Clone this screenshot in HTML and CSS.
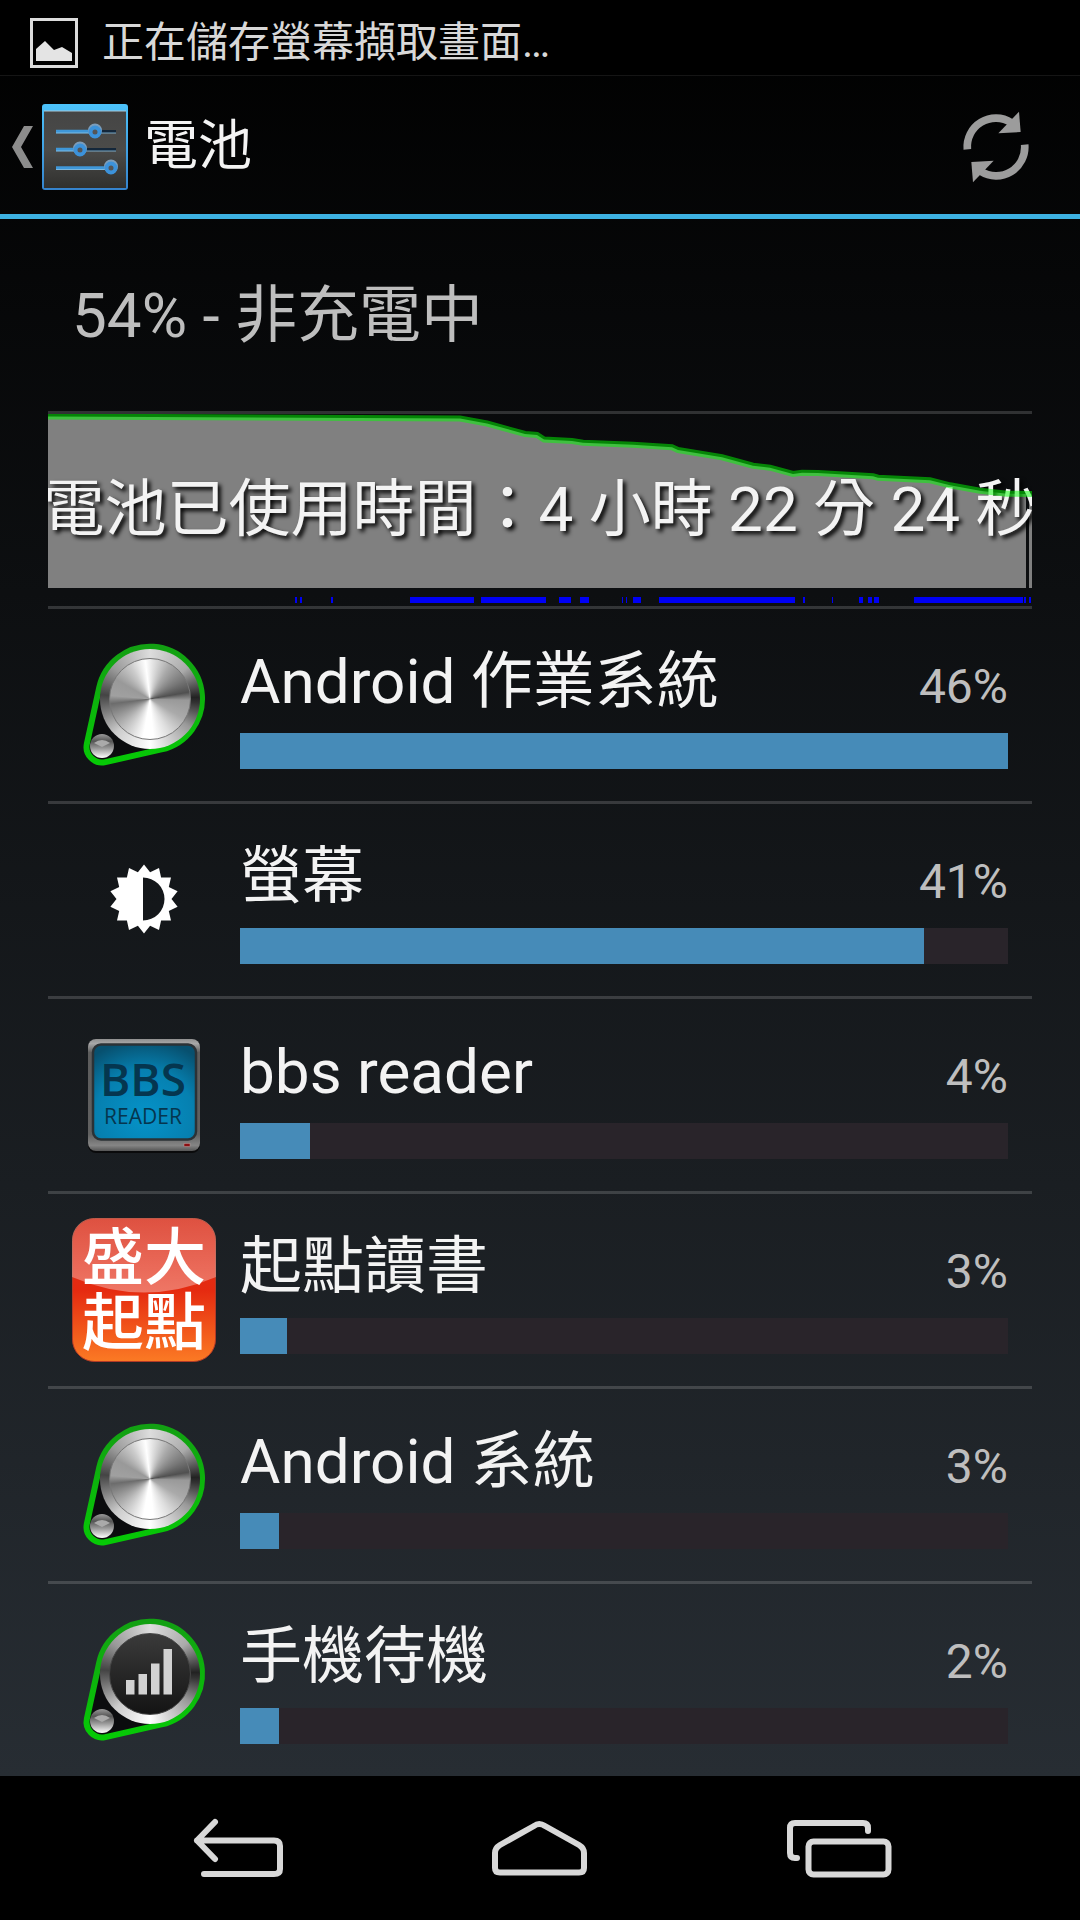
FILE: index.html
```html
<!DOCTYPE html>
<html lang="zh-Hant-TW">
<head>
  <meta charset="UTF-8">
  <title>電池</title>
  <meta name="viewport" content="width=device-width, initial-scale=1.0">
  <link rel="stylesheet" href="styles.css">
</head>
<body>
  <!-- shared drawings -->
  <svg class="defs" aria-hidden="true">
    <defs>
      <linearGradient id="steel" x1="0" y1="0" x2="0" y2="1">
        <stop offset="0" stop-color="#999"/>
        <stop offset=".3" stop-color="#555"/>
        <stop offset=".6" stop-color="#999"/>
        <stop offset="1" stop-color="#fff"/>
      </linearGradient>
      <linearGradient id="belt" x1="0" y1="0" x2="0" y2="1">
        <stop offset="0" stop-color="#12a012"/>
        <stop offset="1" stop-color="#06c906"/>
      </linearGradient>
      <g id="belt-shape">
        <path d="M27.2 54.6A52 52 0 1 1 89.4 116.4L33.4 129.1A15.5 15.5 0 0 1 14.9 110.7Z" fill="#0b0c0e" stroke="url(#belt)" stroke-width="6"/>
        <circle cx="30" cy="113" r="12" fill="url(#steel)"/>
        <path d="M22 110Q30 104 38 110L30 114Z" fill="#aaa"/>
      </g>
    </defs>
  </svg>

  <div class="status-bar">
    <svg class="status-icon" viewBox="0 0 48 50">
      <rect x="1.5" y="1.5" width="45" height="47" fill="none" stroke="#dcdcdc" stroke-width="3"/>
      <path d="M6 31L15 23L24 32L32 29L42 35V43H6Z" fill="#e4e4e4"/>
    </svg>
    <span>正在儲存螢幕擷取畫面…</span>
  </div>

  <header class="action-bar">
    <a class="up" href="#" aria-label="返回">
      <svg class="chevron" viewBox="0 0 22 42">
        <path d="M12 0H21L9 21L21 42H12L0 21Z" fill="#8c8c8c"/>
      </svg>
      <svg class="settings-icon" viewBox="0 0 86 86">
        <defs>
          <linearGradient id="frame" x1="0" y1="0" x2="0" y2="1">
            <stop offset="0" stop-color="#4cc3fb"/>
            <stop offset="1" stop-color="#3583cd"/>
          </linearGradient>
          <linearGradient id="plate" x1="0" y1="0" x2="0" y2="1">
            <stop offset="0" stop-color="#454545"/>
            <stop offset=".5" stop-color="#4b4b49"/>
            <stop offset="1" stop-color="#30302e"/>
          </linearGradient>
        </defs>
        <rect width="86" height="86" rx="3" fill="url(#frame)"/>
        <rect x="2" y="7" width="82" height="77" fill="url(#plate)"/>
        <path d="M2 7H84" stroke="#a5c9dc"/>
        <path d="M53 27.5H74M38 45.5H74" stroke="#14273a" stroke-width="3"/>
        <path d="M14 27.5H53M14 45.5H38M14 64H69" stroke="#3f97d8" stroke-width="3.5"/>
        <path d="M14 29H47M14 47H32M14 65.5H63M59 29H74M44 47H74" stroke="#8ec6e8" stroke-width=".8"/>
        <g fill="#35618a" stroke="#7c9dba" stroke-width="6">
          <circle cx="53" cy="26.5" r="4"/>
          <circle cx="38" cy="44.5" r="4"/>
          <circle cx="69" cy="62.5" r="4"/>
        </g>
        <g fill="#555" stroke="#3c92da" stroke-width="4">
          <circle cx="53" cy="28" r="4.5"/>
          <circle cx="38" cy="46" r="4.5"/>
          <circle cx="69" cy="64" r="4.5"/>
        </g>
      </svg>
    </a>
    <h1>電池</h1>
    <button class="refresh" type="button" aria-label="重新整理">
      <svg viewBox="182 94 216 216">
        <g id="turn">
          <path d="M204 209A86 86 0 0 1 336 129" fill="none" stroke="#9c9c9c" stroke-width="23"/>
          <path d="M359 96L364 157L297 161Z" fill="#9c9c9c"/>
        </g>
        <use href="#turn" transform="rotate(180 290 202)"/>
      </svg>
    </button>
  </header>

  <main>
    <h2 class="summary">54% - 非充電中</h2>

    <div class="chart">
      <svg class="chart-area" viewBox="0 0 984 192" preserveAspectRatio="none">
        <path fill="#808080" d="M0 2.5L412 4.5L439 9.5L477 20L489 21L496 25.5L524 27L535 28.7L585 30.7L624 33.3L630 36L674 43.3L705 51.7L722 53.7L745 60L754 58.7L770 59L825 62.3L830 63.7L882 66.3L902 71.3L932 76.7L959 79.7L978 80V174H0ZM981 80H984V174H981Z"/>
        <path stroke="#0000f5" stroke-width="6" d="M247 186h2M252 186h2M283 186h2M362 186h64M433 186h65M511 186h12M532 186h9M574 186h1M578 186h1M585 186h8M611 186h136M755 186h2M784 186h1M811 186h4M820 186h4M826 186h5M866 186h109M976 186h2M981 186h2"/>
      </svg>
      <span class="chart-label">電池已使用時間：4 小時 22 分 24 秒</span>
      <svg class="chart-line" viewBox="0 0 984 192" preserveAspectRatio="none">
        <path fill="none" stroke="#00ff00" stroke-opacity=".5" stroke-width="6" d="M0 2.5L412 4.5L439 9.5L477 20L489 21L496 25.5L524 27L535 28.7L585 30.7L624 33.3L630 36L674 43.3L705 51.7L722 53.7L745 60L754 58.7L770 59L825 62.3L830 63.7L882 66.3L902 71.3L932 76.7L959 79.7L984 80"/>
      </svg>
    </div>

    <ul class="usage">
      <li>
        <svg class="app-icon" viewBox="0 0 144 144">
          <use href="#belt-shape"/>
          <foreignObject x="28" y="16" width="100" height="100">
            <div class="knob"><div class="knob-face"></div></div>
          </foreignObject>
        </svg>
        <div class="usage-body">
          <div class="usage-title"><span class="name">Android 作業系統</span><span class="percent">46%</span></div>
          <div class="bar"><div class="bar-fill" style="width: 100%"></div></div>
        </div>
      </li>
      <li>
        <svg class="app-icon" viewBox="0 0 144 144">
          <path fill="#fff" fill-rule="evenodd" d="M72 36.5L78.1 44.2L87 39.9L89.1 49.5L99 49.5L96.8 59.1L105.6 63.3L99.5 71L105.6 78.7L96.8 82.9L99 92.5L89.1 92.5L87 102.1L78.1 97.8L72 105.5L65.9 97.8L57 102.1L54.9 92.5L45 92.5L47.2 82.9L38.4 78.7L44.5 71L38.4 63.3L47.2 59.1L45 49.5L54.9 49.5L57 39.9L65.9 44.2ZM71 49.5V92.5A21.5 21.5 0 0 0 71 49.5Z"/>
        </svg>
        <div class="usage-body">
          <div class="usage-title"><span class="name">螢幕</span><span class="percent">41%</span></div>
          <div class="bar"><div class="bar-fill" style="width: 89.1%"></div></div>
        </div>
      </li>
      <li>
        <svg class="app-icon" viewBox="0 0 144 144">
          <defs>
            <linearGradient id="case" x1="0" y1="0" x2="0" y2="1">
              <stop offset="0" stop-color="#8f8f8f"/>
              <stop offset=".04" stop-color="#a8a8a8"/>
              <stop offset=".12" stop-color="#5c5c5c"/>
              <stop offset=".85" stop-color="#606060"/>
              <stop offset=".95" stop-color="#858585"/>
              <stop offset="1" stop-color="#555"/>
            </linearGradient>
            <radialGradient id="screen" cx=".5" cy=".75" r=".8">
              <stop offset="0" stop-color="#0593c9"/>
              <stop offset=".6" stop-color="#0680b0"/>
              <stop offset="1" stop-color="#07506f"/>
            </radialGradient>
          </defs>
          <rect x="16" y="18" width="112" height="112" rx="8" fill="#0a0a0b"/>
          <rect x="16" y="16" width="112" height="112" rx="8" fill="url(#case)"/>
          <rect x="21" y="21.5" width="103" height="95" rx="8" fill="url(#screen)" stroke="#2b3236" stroke-width="2.5"/>
          <text class="bbs" x="71" y="73">BBS</text>
          <text class="bbs-sub" x="71" y="101">READER</text>
          <rect x="112" y="120.5" width="6" height="3" fill="#8c0f12" stroke="#b99" stroke-width=".5"/>
        </svg>
        <div class="usage-body">
          <div class="usage-title"><span class="name">bbs reader</span><span class="percent">4%</span></div>
          <div class="bar"><div class="bar-fill" style="width: 9.1%"></div></div>
        </div>
      </li>
      <li>
        <svg class="app-icon" viewBox="0 0 144 144">
          <defs>
            <linearGradient id="seal" x1="0" y1="0" x2="0" y2="1">
              <stop offset="0" stop-color="#d8301c"/>
              <stop offset=".5" stop-color="#e52a10"/>
              <stop offset="1" stop-color="#fb7a24"/>
            </linearGradient>
            <linearGradient id="gloss" x1="0" y1="0" x2="0" y2="1">
              <stop offset="0" stop-color="#fff" stop-opacity=".16"/>
              <stop offset="1" stop-color="#fff" stop-opacity=".36"/>
            </linearGradient>
          </defs>
          <rect x=".5" y=".5" width="143" height="143" rx="22" fill="url(#seal)" stroke="#b33a26"/>
          <path d="M0 59V22A22 22 0 0 1 22 0H122A22 22 0 0 1 144 22V59Q72 90 0 59Z" fill="url(#gloss)"/>
          <text class="seal-text" x="41" y="62">盛</text>
          <text class="seal-text" x="103" y="62">大</text>
          <text class="seal-text" x="41" y="127">起</text>
          <text class="seal-text" x="103" y="127">點</text>
        </svg>
        <div class="usage-body">
          <div class="usage-title"><span class="name">起點讀書</span><span class="percent">3%</span></div>
          <div class="bar"><div class="bar-fill" style="width: 6.1%"></div></div>
        </div>
      </li>
      <li>
        <svg class="app-icon" viewBox="0 0 144 144">
          <use href="#belt-shape"/>
          <foreignObject x="28" y="16" width="100" height="100">
            <div class="knob"><div class="knob-face"></div></div>
          </foreignObject>
        </svg>
        <div class="usage-body">
          <div class="usage-title"><span class="name">Android 系統</span><span class="percent">3%</span></div>
          <div class="bar"><div class="bar-fill" style="width: 5.1%"></div></div>
        </div>
      </li>
      <li>
        <svg class="app-icon" viewBox="0 0 144 144">
          <use href="#belt-shape"/>
          <foreignObject x="28" y="16" width="100" height="100">
            <div class="knob"><div class="knob-face dark"></div></div>
          </foreignObject>
          <g fill="#d2d2d2">
            <rect x="54" y="72" width="8.5" height="14.5"/>
            <rect x="66.5" y="66" width="8.5" height="20.5"/>
            <rect x="79" y="55.5" width="8.5" height="31"/>
            <rect x="91.5" y="41" width="8.5" height="45.5"/>
          </g>
        </svg>
        <div class="usage-body">
          <div class="usage-title"><span class="name">手機待機</span><span class="percent">2%</span></div>
          <div class="bar"><div class="bar-fill" style="width: 5.1%"></div></div>
        </div>
      </li>
    </ul>
  </main>

  <nav class="nav-bar">
    <button type="button" aria-label="返回">
      <svg viewBox="0 0 108 72">
        <path d="M29 10L11 28.5L29 47M11 28.500H88Q94 28.500 94 34V57Q94 62 88 62H18"/>
      </svg>
    </button>
    <button type="button" aria-label="主畫面">
      <svg viewBox="0 0 108 72">
        <path d="M48 14Q53 10 59 14L93 33Q98 36 98 41V56Q98 60.500 93 60.500H14Q9 60.500 9 56V41Q9 36 14 33Z"/>
      </svg>
    </button>
    <button type="button" aria-label="最近使用的應用程式">
      <svg viewBox="0 0 108 72">
        <path d="M82 19V16Q82 11 77 11H9Q4 11 4 16V41Q4 46 9 46H11"/>
        <rect x="22.500" y="29.500" width="80" height="33" rx="5"/>
      </svg>
    </button>
  </nav>
</body>
</html>
```

FILE: styles.css
```css
* {
  box-sizing: border-box;
}
body {
  margin: 0;
  min-height: 100vh;
  display: flex;
  flex-direction: column;
  font-family: Roboto, "Noto Sans CJK TC", sans-serif;
  color: #f3f3f3;
  background: linear-gradient(#000, #272d33 1776px);
}
h1, h2 {
  margin: 0;
  font-weight: 400;
}
button {
  padding: 0;
  border: none;
  background: none;
  cursor: pointer;
}
svg {
  display: block;
  flex: none;
}
.defs {
  position: absolute;
  width: 0;
  height: 0;
}

/* top bars */
.status-bar {
  display: flex;
  align-items: center;
  gap: 24px;
  height: 76px;
  padding: 10px 30px 0;
  background: #000;
  border-bottom: 1px solid #151515;
  color: #d8d8d8;
  font-size: 42px;
  line-height: 48px;
}
.status-icon {
  width: 48px;
  height: 50px;
}
.action-bar {
  display: flex;
  align-items: center;
  height: 143px;
  padding: 4px 48px 0 12px;
  border-bottom: 5px solid #3db2e2;
}
.up {
  display: flex;
  align-items: center;
  gap: 8px;
}
.chevron {
  width: 22px;
  height: 42px;
}
.settings-icon {
  width: 86px;
  height: 86px;
}
.action-bar h1 {
  flex: 1;
  padding-left: 16px;
  font-size: 54px;
  line-height: 64px;
}
.refresh svg {
  width: 72px;
  height: 72px;
}

/* list */
main {
  flex: 1;
  padding: 0 48px;
}
.summary {
  padding: 61px 24px 59px;
  border-bottom: 3px solid rgba(255, 255, 255, 0.16);
  color: #bebebe;
  font-size: 62px;
  line-height: 72px;
}
.chart {
  position: relative;
  display: flex;
  align-items: center;
  justify-content: center;
  height: 195px;
  overflow: hidden;
  border-bottom: 3px solid rgba(255, 255, 255, 0.16);
}
.chart-area, .chart-line {
  position: absolute;
  top: 0;
  left: 0;
  width: 100%;
  height: 192px;
}
.chart-label {
  position: relative;
  flex: none;
  white-space: nowrap;
  font-size: 62px;
  line-height: 72px;
  text-shadow: 3px 3px 4px #000;
}
.usage {
  margin: 0;
  padding: 0;
  list-style: none;
}
.usage li {
  display: flex;
  gap: 24px;
  padding: 24px;
  border-bottom: 3px solid rgba(255, 255, 255, 0.16);
}
.usage li:last-child {
  border-bottom: none;
}
.app-icon {
  width: 144px;
  height: 144px;
}
.usage-body {
  flex: 1;
  padding-top: 13px;
}
.usage-title {
  display: flex;
  align-items: baseline;
  justify-content: space-between;
  height: 72px;
  margin-bottom: 15px;
  line-height: 72px;
}
.name {
  font-size: 62px;
}
.percent {
  color: #bebebe;
  font-size: 48px;
}
.bar {
  height: 36px;
  background: #29242a;
}
.bar-fill {
  height: 36px;
  background: #468bb8;
}

/* app icons */
.knob {
  width: 100px;
  height: 100px;
  padding: 9px;
  border-radius: 50%;
  background: conic-gradient(#ddd, #aaa 50deg, #222 88deg, #333 95deg, #999 125deg, #fff 180deg, #ccc 225deg, #666 262deg, #444 275deg, #999 310deg, #ddd);
}
.knob-face {
  width: 82px;
  height: 82px;
  border-radius: 50%;
  border: 1px solid #777;
  background: conic-gradient(#eee, #aaa 30deg, #777 60deg, #505050 80deg, #999 92deg, #aaa 120deg, #ddd 150deg, #fff 175deg, #fff 190deg, #bbb 225deg, #888 250deg, #6c6c6c 263deg, #a0a0a0 275deg, #999 300deg, #ccc 330deg, #fff 353deg, #eee);
}
.knob-face.dark {
  border-color: #444;
  background: linear-gradient(#3a3a3a, #141414);
}
.bbs, .bbs-sub {
  font-family: "Open Sans", sans-serif;
  fill: #05364f;
  text-anchor: middle;
}
.bbs {
  font-size: 46px;
  font-weight: 600;
}
.bbs-sub {
  font-size: 21px;
}
.seal-text {
  font-size: 62px;
  font-weight: 500;
  fill: #fff;
  text-anchor: middle;
}

/* system buttons */
.nav-bar {
  display: flex;
  justify-content: center;
  height: 144px;
  background: #000;
}
.nav-bar button {
  display: flex;
  align-items: center;
  justify-content: center;
  width: 300px;
}
.nav-bar svg {
  width: 108px;
  height: 72px;
  fill: none;
  stroke: #d8d8d8;
  stroke-width: 6;
  stroke-linecap: round;
  stroke-linejoin: round;
}
```
